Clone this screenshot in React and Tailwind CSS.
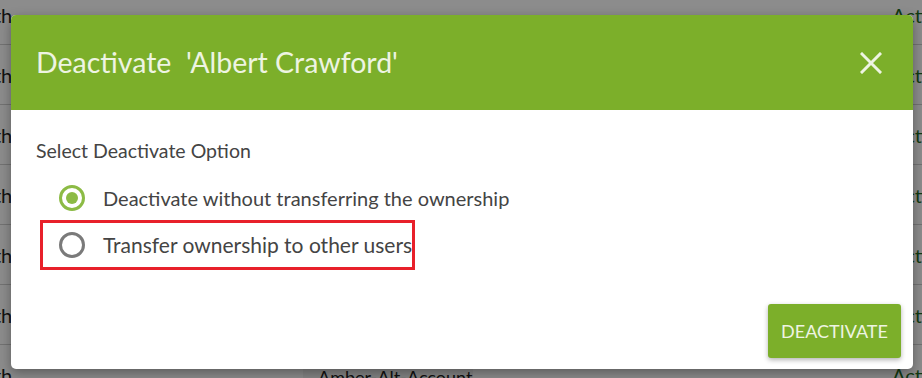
import React from 'react';

const rows = ['Smith', 'Smith', 'Smith', 'Smith', 'Smith', 'Smith', 'Smith'];

const Radio = ({ checked }) => (
  <span
    className={
      'flex h-[26px] w-[26px] shrink-0 items-center justify-center rounded-full ' +
      (checked ? 'border-[3px] border-[#8cbb45]' : 'border-[3px] border-[#7a7a7a]')
    }
  >
    {checked && <span className="h-[12px] w-[12px] rounded-full bg-[#8cbb45]"></span>}
  </span>
);

const App = () => {
  return (
    <div
      className="relative h-[378px] w-[922px] overflow-hidden bg-white"
      style={{ fontFamily: 'Lato, "Noto Sans", sans-serif' }}
    >
      {/* table behind the dialog */}
      <div className="flex flex-col -mt-[15px]">
        {rows.map((name, i) => (
          <div key={i} className="flex h-[60px] items-center border-b border-[#cfcfcf] text-[20px] text-[#222]">
            <span className="-ml-[38px] w-[60px]">{name}</span>
            <span className="ml-auto -mr-[30px] w-[60px] text-[#1f6b1f]">Active</span>
          </div>
        ))}
      </div>
      <div className="absolute left-[303px] top-[362px] h-[30px] w-[170px] whitespace-nowrap bg-[#f3f3f3] px-[15px] text-[18px] leading-[30px] text-[#222]">
        Amber-Alt-Account
      </div>

      {/* overlay */}
      <div className="absolute inset-0 bg-black/45"></div>

      {/* dialog */}
      <div className="absolute left-[11px] top-[15px] flex h-[354px] w-[902px] flex-col overflow-hidden rounded-[5px] bg-white shadow-[0_4px_12px_rgba(0,0,0,0.35)]">
        <div className="flex h-[95px] shrink-0 items-center justify-between bg-[#7caf2a] pl-[25px] pr-[31px]">
          <h2 className="whitespace-pre text-[28.5px] font-normal text-[#eef4e2]">Deactivate  'Albert Crawford'</h2>
          <svg width="22" height="22" viewBox="0 0 22 22" className="text-[#eef4e2]">
            <path d="M2 2 L20 20 M20 2 L2 20" stroke="currentColor" strokeWidth="3" strokeLinecap="square" />
          </svg>
        </div>

        <div className="flex flex-1 flex-col">
          <p className="pl-[25px] pt-[28px] text-[19.5px] leading-[26px] text-[#444]">Select Deactivate Option</p>
          <div className="mt-[10px] flex flex-col pl-[29px]">
            <label className="flex h-[48px] items-center gap-[18px] whitespace-nowrap border-[3px] border-transparent px-[16px] text-[20px] text-[#444]">
              <Radio checked />
              <span>Deactivate without transferring the ownership</span>
            </label>
            <label className="-mt-[2px] flex h-[50px] w-[375px] items-center gap-[18px] whitespace-nowrap border-[3px] border-[#e8202a] px-[16px] text-[21px] text-[#444]">
              <Radio />
              <span>Transfer ownership to other users</span>
            </label>
          </div>
          <div className="mt-auto flex justify-end pb-[11px] pr-[12px]">
            <button className="h-[54px] w-[133px] rounded-[3px] bg-[#7caf2a] text-[18px] text-[#eef4e2] shadow-[0_2px_5px_rgba(0,0,0,0.3)]">
              DEACTIVATE
            </button>
          </div>
        </div>
      </div>
    </div>
  );
};

export default App;
